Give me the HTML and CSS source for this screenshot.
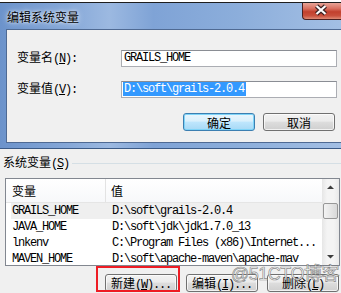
FILE: index.html
```html
<!DOCTYPE html>
<html lang="zh-CN">
<head>
    <meta charset="UTF-8">
    <meta name="viewport" content="width=device-width, initial-scale=1.0">
    <title>编辑系统变量</title>
    <link rel="stylesheet" href="styles.css">
</head>
<body>
    <div class="top-strip"></div>

    <div class="dialog">
        <div class="titlebar">
            <span class="title">编辑系统变量</span>
            <span class="close">
                <svg width="39" height="17" viewBox="0 0 39 17">
                    <path d="M14.5 4 L23.5 12 M23.5 4 L14.5 12" stroke="#3b2222" stroke-width="4.5" fill="none"/>
                    <path d="M14.5 4 L23.5 12 M23.5 4 L14.5 12" stroke="#fff" stroke-width="2.2" fill="none"/>
                </svg>
            </span>
        </div>
        <div class="client">
            <div class="form-row">
                <label>变量名<span class="a">(<u>N</u>):</span></label>
                <div class="field"><span class="a">GRAILS_HOME</span></div>
            </div>
            <div class="form-row">
                <label>变量值<span class="a">(<u>V</u>):</span></label>
                <div class="field"><span class="a sel">D:\soft\grails-2.0.4</span></div>
            </div>
            <div class="btn-row">
                <button class="btn default">确定</button>
                <button class="btn">取消</button>
            </div>
        </div>
    </div>

    <div class="group-title"><span>系统变量<span class="a">(<u>S</u>)</span></span></div>

    <div class="listbox">
        <div class="list-main">
            <div class="list-head">
                <div class="h1">变量</div>
                <div class="h2">值</div>
            </div>
            <div class="list-row hot"><span class="c1 a">GRAILS_HOME</span><span class="a">D:\soft\grails-2.0.4</span></div>
            <div class="list-row"><span class="c1 a">JAVA_HOME</span><span class="a">D:\soft\jdk\jdk1.7.0_13</span></div>
            <div class="list-row"><span class="c1 a">lnkenv</span><span class="a">C:\Program Files (x86)\Internet...</span></div>
            <div class="list-row"><span class="c1 a">MAVEN_HOME</span><span class="a">D:\soft\apache-maven\apache-mav</span></div>
        </div>
        <div class="scrollbar">
            <div class="arrow"><svg width="17" height="17"><polygon points="5,10 8.5,6.5 12,10" fill="#3d3d3d"/></svg></div>
            <div class="thumb"></div>
            <div class="arrow down"><svg width="17" height="17"><polygon points="5,7 8.5,10.5 12,7" fill="#3d3d3d"/></svg></div>
        </div>
    </div>

    <div class="btn-row bottom">
        <button class="btn">新建<span class="a">(<u>W</u>)...</span></button>
        <button class="btn">编辑<span class="a">(<u>I</u>)...</span></button>
        <button class="btn">删除<span class="a">(<u>L</u>)</span></button>
    </div>

    <div class="mark-box"></div>
    <div class="watermark">@51CTO博客</div>
</body>
</html>
```

FILE: styles.css
```css
body { margin: 0; width: 341px; height: 293px; overflow: hidden; position: relative; background: #f0f0f0; font: 12px "Noto Sans CJK SC", sans-serif; color: #000; }
.a { font-family: "Liberation Mono", "Noto Sans CJK SC", monospace; font-size: 12px; letter-spacing: -1.2px; }
u { text-decoration: underline; text-underline-offset: 1px; }

.top-strip { height: 2px; background: #fff; border-bottom: 1px solid #1e1e1e; }

.dialog { padding: 0 0 5px 6px; background: linear-gradient(90deg, #6c93cb 0, #86a8d8 20%, #9cb9e1 32%, #7fa3d6 45%, #8caedb 70%, #a3bfe4 100%); border-bottom: 1px solid #3b5a86; }
.titlebar { display: flex; align-items: flex-start; height: 26px; margin-left: -6px; }
.title { padding: 5px 0 0 7px; line-height: 17px; text-shadow: 0 0 6px rgba(255,255,255,.9), 0 0 3px rgba(255,255,255,.7); }
.close { margin-left: auto; width: 39px; height: 17px; box-sizing: border-box; border: 1px solid #4a2020; border-top: none; border-right: none; border-radius: 0 0 0 4px; background: linear-gradient(#e7a497 0, #d9705f 35%, #c2402d 55%, #c9503c 80%, #df8b75 100%); }
.close svg { display: block; margin-top: -1px; margin-left: -1px; }

.client { border: 1px solid #4f6a93; border-right: none; background: #f0f0f0; padding: 18px 0 11px 10px; }
.form-row { display: flex; align-items: center; margin-bottom: 11px; }
.form-row label { width: 104px; line-height: 17px; }
.field { width: 216px; height: 17px; box-sizing: border-box; border: 1px solid #abadb3; border-top-color: #8a8d94; background: #fff; display: flex; align-items: center; padding-left: 1px; }
.field .a { padding-left: 1px; line-height: 14px; }
.sel { background: #3399ff; color: #fff; padding-right: 2px; }

.btn-row { display: flex; gap: 8px; padding-left: 166px; margin-top: 14px; }
.btn { width: 72px; height: 18px; padding: 0; box-sizing: border-box; border: 1px solid #707070; border-radius: 3px; background: linear-gradient(#f2f2f2 0, #ebebeb 45%, #dddddd 50%, #cfcfcf 100%); font: 12px "Noto Sans CJK SC", sans-serif; line-height: 15px; color: #000; box-shadow: inset 0 0 0 1px rgba(255,255,255,.7); }
.btn.default { border-color: #3c7fb1; background: linear-gradient(#eaf6fd 0, #d9f0fc 45%, #bee6fd 50%, #a7d9f5 100%); box-shadow: inset 0 0 0 1px #7fd4f8; }

.group-title { display: flex; align-items: center; height: 14px; margin-top: 7px; padding-left: 3px; line-height: 14px; }
.group-title::after { content: ""; flex: 1; height: 1px; background: #d5dfe5; margin-left: 3px; }

.listbox { display: flex; width: 335px; height: 88px; box-sizing: border-box; margin: 8px 0 0 5px; border: 1px solid #828790; background: #fff; }
.list-main { flex: 1; overflow: hidden; }
.list-head { display: flex; height: 24px; box-sizing: border-box; border-bottom: 1px solid #e5e5e5; line-height: 23px; background: linear-gradient(#fff, #f7f8fa); }
.h1 { width: 100px; box-sizing: border-box; padding-left: 6px; border-right: 1px solid #e3e3e3; }
.h2 { padding-left: 5px; }
.list-row { display: flex; height: 16px; line-height: 16px; margin-left: 5px; padding-left: 1px; white-space: nowrap; }
.list-row.hot { background: #efefef; }
.c1 { width: 100px; flex: none; }

.scrollbar { width: 17px; display: flex; flex-direction: column; background: linear-gradient(90deg, #e6e6e6, #f4f4f4 30%, #f4f4f4 70%, #e9e9e9); }
.arrow { height: 17px; }
.arrow svg { display: block; }
.arrow.down { margin-top: auto; }
.thumb { height: 16px; margin: 7px 1px 0; box-sizing: border-box; border: 1px solid #979797; border-radius: 2px; background: linear-gradient(90deg, #f3f3f3, #e6e6e6 50%, #d8d8d8); }

.btn-row.bottom { padding-left: 105px; gap: 9px; margin-top: 8px; }

.mark-box { position: absolute; left: 96px; top: 266px; width: 84px; height: 26px; box-sizing: border-box; border: 2px solid #ee1c24; }
.watermark { position: absolute; left: 231px; top: 263px; font: 18px "Liberation Sans", "Noto Sans CJK SC", sans-serif; line-height: 22px; letter-spacing: -0.5px; color: rgba(250,250,250,.85); -webkit-text-stroke: 0.7px rgba(80,80,80,.65); }
```
